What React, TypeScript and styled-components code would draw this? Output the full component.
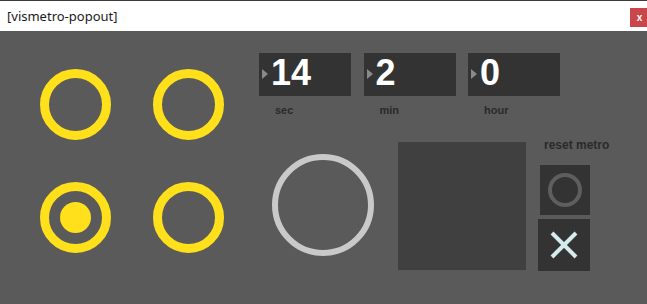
import styled, { createGlobalStyle } from "styled-components";

const GlobalStyle = createGlobalStyle`
  html, body {
    margin: 0;
    padding: 0;
    height: 100%;
    background: #5a5a5a;
  }
  #root {
    height: 100%;
  }
`;

const App = () => {
  const rings = [false, false, true, false];
  const counters = [
    { value: "14", label: "sec" },
    { value: "2", label: "min" },
    { value: "0", label: "hour" },
  ];

  return (
    <Window>
      <GlobalStyle />
      <TitleBar>
        <Title>[vismetro-popout]</Title>
        <CloseButton>x</CloseButton>
      </TitleBar>
      <Body>
        <RingGrid>
          {rings.map((on, i) => (
            <Ring key={i}>{on && <Dot />}</Ring>
          ))}
        </RingGrid>
        <RightArea>
          <CounterRow>
            {counters.map((c) => (
              <Counter key={c.label}>
                <NumberBox>
                  <Arrow />
                  <NumberText>{c.value}</NumberText>
                </NumberBox>
                <CounterLabel>{c.label}</CounterLabel>
              </Counter>
            ))}
          </CounterRow>
          <LowerRow>
            <BigRing />
            <Panel />
            <ResetColumn>
              <ResetLabel>reset metro</ResetLabel>
              <ToggleButton>
                <ToggleRing />
              </ToggleButton>
              <ClearButton>
                <svg width="30" height="30" viewBox="0 0 30 30">
                  <path
                    d="M3 3 L27 27 M27 3 L3 27"
                    stroke="#d4ecec"
                    strokeWidth="4"
                    fill="none"
                  />
                </svg>
              </ClearButton>
            </ResetColumn>
          </LowerRow>
        </RightArea>
      </Body>
    </Window>
  );
};

const Window = styled.div`
  display: flex;
  flex-direction: column;
  height: 100%;
  background: #5a5a5a;
`;

const TitleBar = styled.div`
  display: flex;
  justify-content: space-between;
  align-items: flex-start;
  height: 31px;
  box-sizing: border-box;
  background: #ffffff;
  border-top: 1px solid #3a3a3a;
`;

const Title = styled.span`
  margin: 6px 0 0 7px;
  font-family: "Noto Sans", "Open Sans", sans-serif;
  font-size: 13px;
  line-height: 18px;
  color: #1a1a1a;
`;

const CloseButton = styled.span`
  display: flex;
  align-items: center;
  justify-content: center;
  width: 17px;
  height: 19px;
  margin-top: 7px;
  padding-left: 2px;
  box-sizing: border-box;
  background: #c9474a;
  color: #fff;
  font-family: "Liberation Sans", Arial, sans-serif;
  font-weight: 700;
  font-size: 10px;
`;

const Body = styled.div`
  display: flex;
  flex: 1;
`;

const RingGrid = styled.div`
  display: grid;
  grid-template-columns: 71px 71px;
  grid-auto-rows: 71px;
  column-gap: 42px;
  row-gap: 42px;
  padding: 38px 0 0 40px;
  align-content: start;
`;

const Ring = styled.div`
  display: flex;
  align-items: center;
  justify-content: center;
  box-sizing: border-box;
  width: 71px;
  height: 71px;
  border: 9px solid #ffe01a;
  border-radius: 50%;
`;

const Dot = styled.div`
  width: 31px;
  height: 31px;
  border-radius: 50%;
  background: #ffe01a;
`;

const RightArea = styled.div`
  display: flex;
  flex-direction: column;
  margin-left: 35px;
  padding-top: 22px;
`;

const CounterRow = styled.div`
  display: flex;
  gap: 12.5px;
`;

const Counter = styled.div`
  display: flex;
  flex-direction: column;
`;

const NumberBox = styled.div`
  display: flex;
  align-items: center;
  width: 92px;
  height: 43px;
  background: #333333;
`;

const Arrow = styled.div`
  width: 0;
  height: 0;
  margin: -2px 0 0 3px;
  border-top: 5px solid transparent;
  border-bottom: 5px solid transparent;
  border-left: 6px solid #8a8a8a;
`;

const NumberText = styled.span`
  align-self: flex-start;
  margin: 2px 0 0 3px;
  font-family: "Liberation Sans", Arial, sans-serif;
  font-weight: 700;
  font-size: 36px;
  line-height: 36px;
  color: #ffffff;
`;

const CounterLabel = styled.span`
  margin-top: 7px;
  padding-left: 16px;
  font-family: "Liberation Sans", Arial, sans-serif;
  font-weight: 700;
  font-size: 11px;
  line-height: 14px;
  color: #2a2a2a;
`;

const LowerRow = styled.div`
  display: flex;
  align-items: flex-start;
  margin-top: 22px;
`;

const BigRing = styled.div`
  box-sizing: border-box;
  width: 102px;
  height: 102px;
  margin: 15px 0 0 13px;
  border: 6px solid #c9c9c9;
  border-radius: 50%;
`;

const Panel = styled.div`
  width: 128px;
  height: 128px;
  margin: 3px 0 0 24px;
  background: #404040;
`;

const ResetColumn = styled.div`
  display: flex;
  flex-direction: column;
  width: 52px;
  margin-left: 12px;
`;

const ResetLabel = styled.span`
  padding-left: 6px;
  white-space: nowrap;
  font-family: "Liberation Sans", Arial, sans-serif;
  font-weight: 700;
  font-size: 12px;
  line-height: 13px;
  color: #2a2a2a;
`;

const ToggleButton = styled.div`
  display: flex;
  align-items: center;
  justify-content: center;
  width: 50px;
  height: 50px;
  margin: 13px 0 0 2px;
  background: #333333;
`;

const ToggleRing = styled.div`
  box-sizing: border-box;
  width: 34px;
  height: 34px;
  border: 4px solid #5e5e5e;
  border-radius: 50%;
`;

const ClearButton = styled.div`
  display: flex;
  align-items: center;
  justify-content: center;
  width: 52px;
  height: 52px;
  margin-top: 4px;
  background: #333333;
`;

export default App;
